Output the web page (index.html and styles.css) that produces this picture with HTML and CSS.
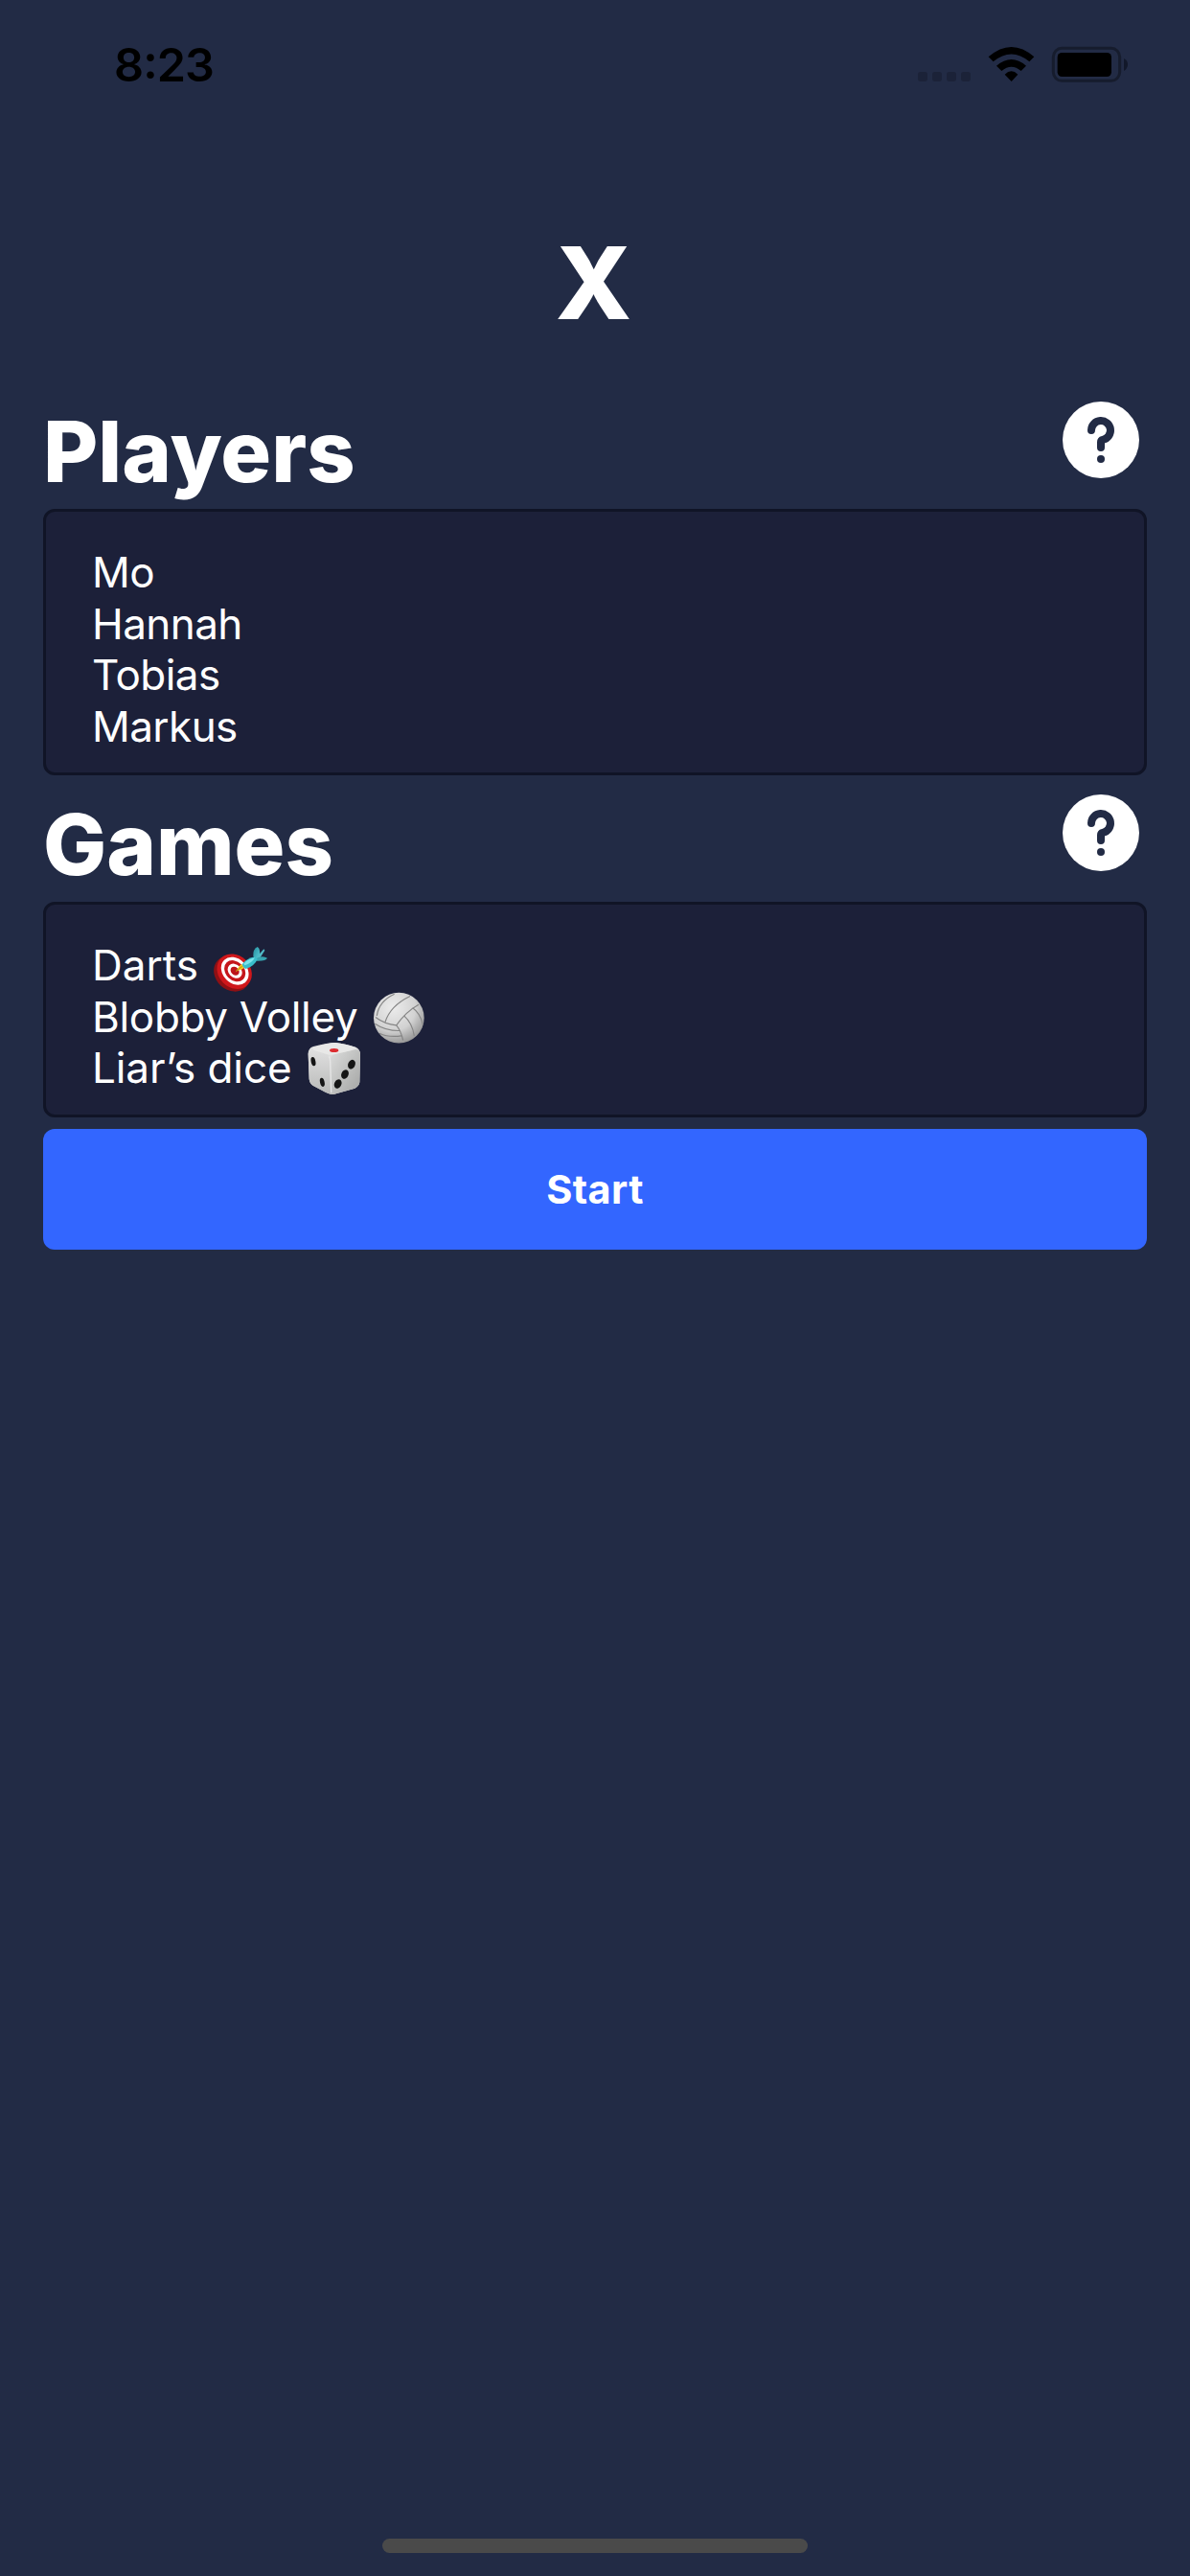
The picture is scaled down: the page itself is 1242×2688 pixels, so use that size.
FILE: index.html
```html
<!DOCTYPE html>
<html lang="en">
<head>
<meta charset="utf-8">
<title>Players and games</title>
<link rel="stylesheet" href="styles.css">
</head>
<body>
<div class="screen">
  <header class="status-bar">
    <span class="time">8<span class="colon">:</span>23</span>
    <svg class="status-icons" viewBox="0 0 780 240" aria-hidden="true">
      <g fill="#1b2238">
        <rect x="54" y="135" width="30" height="30" rx="9"/>
        <rect x="99" y="135" width="30" height="30" rx="9"/>
        <rect x="144" y="135" width="30" height="30" rx="9"/>
        <rect x="189" y="135" width="30" height="30" rx="9"/>
      </g>
      <path d="M275 88Q347 26 418 88L403 103Q347 56 290 103ZM300 116Q347 76 393 116L377 132Q347 106 316 132ZM326 143Q347 123 367 143L347 165Z"/>
      <rect x="478" y="61" width="208" height="102" rx="27" fill="none" stroke="#161c2d" stroke-width="9"/>
      <rect x="491" y="75" width="169" height="75" rx="14"/>
      <path d="M699 93Q711 99 711 112T699 132Z" fill="#12182a"/>
    </svg>
  </header>
  <main class="content">
    <h1 class="title">X</h1>

    <section>
      <div class="section-head">
        <h2 class="heading">Players</h2>
        <svg class="help" viewBox="0 0 240 240" role="img" aria-label="Help">
          <circle cx="120" cy="120" r="120" fill="#fff"/>
          <path d="M90 90A30 30 0 1 1 126 119.500Q120 121 120 127V144" fill="none" stroke="#222b45" stroke-width="24" stroke-linecap="round" stroke-linejoin="round"/>
          <circle cx="120" cy="180" r="12" fill="#222b45"/>
        </svg>
      </div>
      <ul class="card names">
        <li><span>Mo</span></li>
        <li><span>Hannah</span></li>
        <li><span>Tobias</span></li>
        <li><span>Markus</span></li>
      </ul>
    </section>

    <section>
      <div class="section-head">
        <h2 class="heading">Games</h2>
        <svg class="help" viewBox="0 0 240 240" role="img" aria-label="Help">
          <circle cx="120" cy="120" r="120" fill="#fff"/>
          <path d="M90 90A30 30 0 1 1 126 119.500Q120 121 120 127V144" fill="none" stroke="#222b45" stroke-width="24" stroke-linecap="round" stroke-linejoin="round"/>
          <circle cx="120" cy="180" r="12" fill="#222b45"/>
        </svg>
      </div>
      <ul class="card games">
        <li>
          <span class="darts">Darts</span>
          <svg class="emoji" viewBox="60 24 180 180" aria-hidden="true">
            <defs><linearGradient id="fin" x1="0" y1="0" x2="1" y2="1"><stop offset="0" stop-color="#238c9a"/><stop offset="1" stop-color="#5bd0dd"/></linearGradient></defs>
            <ellipse cx="126" cy="138" rx="61" ry="51" transform="rotate(43 126 138)" fill="#8f1014"/>
            <g transform="rotate(46 134 131)">
              <ellipse cx="134" cy="131" rx="59" ry="50" fill="#cf171b"/>
              <ellipse cx="134" cy="129" rx="48" ry="38" fill="#fff"/>
              <ellipse cx="134" cy="129" rx="37" ry="29" fill="#c5161b"/>
              <ellipse cx="134" cy="129" rx="25" ry="20" fill="#fff"/>
              <ellipse cx="134" cy="129" rx="15" ry="12" fill="#bd151a"/>
            </g>
            <path d="M138 131L152 111Q159 104 166 119L158 124Z" fill="#f3c51d"/>
            <path d="M138 131L158 115" stroke="#b58916" stroke-width="3"/>
            <path d="M193 83Q191 62 206 54Q216 59 213 84L203 95Z" fill="url(#fin)"/>
            <path d="M200 91L226 61L229 65L209 97Z" fill="#50bbc7"/>
            <path d="M201 91Q221 79 237 89Q233 99 203 98Z" fill="#37a4b0"/>
            <path d="M158 109Q170 91 198 85L206 93Q197 114 170 123Q160 120 158 109Z" fill="#38bdca"/>
            <path d="M163 107Q176 92 198 88Q190 104 167 112Z" fill="#7be2ea"/>
          </svg>
        </li>
        <li>
          <span class="volley">Blobby Volley</span>
          <svg class="emoji" viewBox="561 184.500 180 180" aria-hidden="true">
            <defs><radialGradient id="ball" cx=".38" cy=".3" r=".75"><stop offset="0" stop-color="#ececec"/><stop offset=".6" stop-color="#d2d2d2"/><stop offset="1" stop-color="#929292"/></radialGradient></defs>
            <circle cx="649" cy="278" r="79" fill="url(#ball)"/>
            <g fill="none" stroke="#858585" stroke-width="3.500">
              <path d="M576 276Q605 298 641 301Q655 317 662 348"/>
              <path d="M641 301Q671 258 711 236"/>
              <path d="M606 291Q622 240 684 210"/>
              <path d="M580 271Q586 226 635 203"/>
              <path d="M665 271Q691 294 697 334M692 247Q716 263 724 300"/>
              <path d="M574 296Q608 319 652 318M588 326Q617 340 657 334"/>
            </g>
          </svg>
        </li>
        <li>
          <span class="dice">Liar’s dice</span>
          <svg class="emoji" viewBox="357 345 180 180" aria-hidden="true">
            <defs>
              <linearGradient id="left" x1="0" y1="0" x2="0" y2="1"><stop offset="0" stop-color="#dfdfdf"/><stop offset="1" stop-color="#b9bab9"/></linearGradient>
              <linearGradient id="right" x1="0" y1="0" x2="1" y2="1"><stop offset="0" stop-color="#dcdddc"/><stop offset="1" stop-color="#a3a4a3"/></linearGradient>
            </defs>
            <path d="M381 366Q431 353 451 354Q479 357 514 368Q528 374 528 391L526 477Q525 490 511 497L452 514Q440 518 428 513L381 489Q369 481 368 467L365 389Q365 371 381 366Z" fill="#dededd"/>
            <path d="M365 389Q366 373 382 377L423 390Q434 395 434 411L437 515Q428 514 418 509L381 489Q369 481 368 467Z" fill="url(#left)"/>
            <path d="M434 411Q434 394 447 390L512 376Q528 374 528 391L526 477Q525 490 511 497L452 514Q444 517 437 515Z" fill="url(#right)"/>
            <path d="M377 370Q431 354 451 354Q479 357 516 370Q514 377 446 391Q433 394 423 390L382 377Z" fill="#e8e8e7"/>
            <path d="M434 411Q434 403 430 397M434 411L437 510" fill="none" stroke="#e6e6e6" stroke-width="4"/>
            <ellipse cx="446" cy="378" rx="14" ry="6" fill="#dc2d30"/>
            <g fill="#151515">
              <ellipse cx="381" cy="413" rx="7" ry="14" transform="rotate(-12 381 413)"/>
              <ellipse cx="409" cy="478" rx="7" ry="14" transform="rotate(-12 409 478)"/>
              <ellipse cx="501" cy="422" rx="11" ry="15" transform="rotate(25 501 422)"/>
              <ellipse cx="480" cy="453" rx="11" ry="15" transform="rotate(25 480 453)"/>
              <ellipse cx="458" cy="483" rx="11" ry="15" transform="rotate(25 458 483)"/>
            </g>
          </svg>
        </li>
      </ul>
    </section>

    <button class="start" type="button">Start</button>
  </main>
  <div class="home-indicator"></div>
</div>
</body>
</html>
```
FILE: styles.css
```css
* { box-sizing: border-box; }

body {
  margin: 0;
  background: #222b45;
  color: #fff;
  font-family: Inter, "Liberation Sans", sans-serif;
}

.screen {
  display: flex;
  flex-direction: column;
  height: 2688px;
}

.status-bar {
  display: flex;
  justify-content: space-between;
  height: 132px;
  padding: 30px 42px 0 119px;
  color: #000;
}

.time {
  font-size: 48.500px;
  font-weight: 600;
  line-height: 76px;
  letter-spacing: -0.900px;
}

.colon { vertical-align: 3px; line-height: 1; }

.status-icons { width: 260px; height: 80px; }

.content {
  display: flex;
  flex: 1;
  flex-direction: column;
  padding: 0 45px;
}

.title {
  height: 267px;
  margin: 0;
  padding: 109px 3px 0 0;
  font-size: 104.500px;
  font-weight: 770;
  line-height: 108px;
  text-align: center;
}

.section-head {
  display: flex;
  justify-content: space-between;
  height: 132px;
  padding: 20px 8px 0 0;
}

.heading {
  margin: 0;
  font-size: 88px;
  font-weight: 800;
  line-height: 104px;
}

.help { width: 80px; height: 80px; }

.card {
  margin: 0;
  padding: 37px 48px 20.330px;
  border: 3px solid #101426;
  border-radius: 12px;
  background: #1c2039;
  font-size: 44px;
  line-height: 53.670px;
  list-style: none;
}

.card li {
  display: flex;
  align-items: center;
  height: 53.670px;
  white-space: nowrap;
}

.names { letter-spacing: -0.550px; }

.games { padding-bottom: 21px; }

.darts { width: 124px; }

.volley { width: 291px; letter-spacing: -0.300px; }

.dice { width: 223px; letter-spacing: -0.100px; }

.emoji {
  flex: none;
  width: 60px;
  height: 60px;
}

.start {
  height: 126px;
  margin: 12px 0 0;
  padding: 0;
  border: 0;
  border-radius: 12px;
  background: #36f;
  color: #fff;
  font: 700 41.500px/124px Inter, "Liberation Sans", sans-serif;
  letter-spacing: 0.400px;
}

.home-indicator {
  align-self: center;
  width: 444px;
  height: 15px;
  margin-bottom: 24px;
  border-radius: 8px;
  background: #4a4a4a;
}
```
